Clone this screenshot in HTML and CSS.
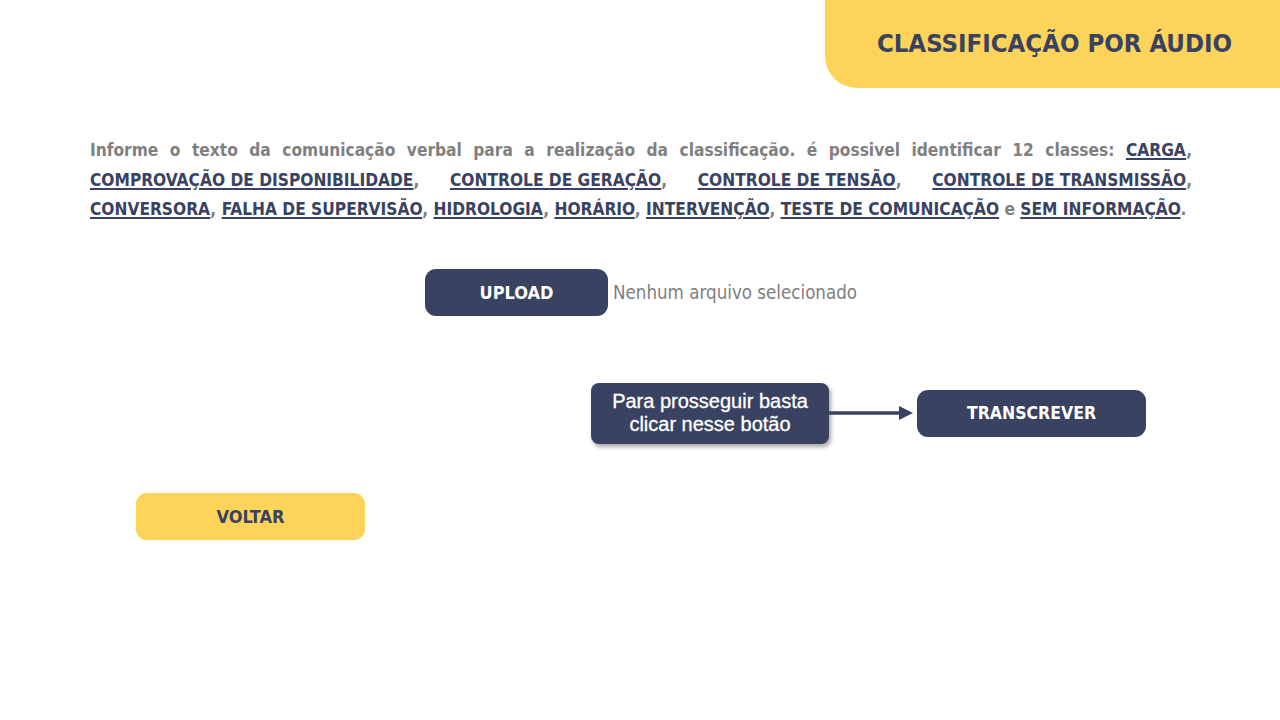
FILE: index.html
```html
<!DOCTYPE html>
<html lang="pt-BR">
<head>
<meta charset="utf-8">
<title>Classificação por Áudio</title>
<link rel="stylesheet" href="styles.css">
</head>
<body>
<div class="page">
  <header class="topbar">
    <div class="title-tab"><h1>CLASSIFICAÇÃO POR ÁUDIO</h1></div>
  </header>

  <section class="intro">
    <span class="line just">Informe o texto da comunicação verbal para a realização da classificação. é possivel identificar 12 classes: <a href="#">CARGA</a>,</span>
    <span class="line just blocks"><a href="#">COMPROVAÇÃO DE DISPONIBILIDADE</a>, <a href="#">CONTROLE DE GERAÇÃO</a>, <a href="#">CONTROLE DE TENSÃO</a>, <a href="#">CONTROLE DE TRANSMISSÃO</a>,</span>
    <span class="line last"><a href="#">CONVERSORA</a>, <a href="#">FALHA DE SUPERVISÃO</a>, <a href="#">HIDROLOGIA</a>, <a href="#">HORÁRIO</a>, <a href="#">INTERVENÇÃO</a>, <a href="#">TESTE DE COMUNICAÇÃO</a> e <a href="#">SEM INFORMAÇÃO</a>.</span>
  </section>

  <div class="upload-row">
    <button class="btn dark upload">UPLOAD</button>
    <span class="file-name">Nenhum arquivo selecionado</span>
  </div>

  <div class="transcribe-row">
    <div class="hint">Para prosseguir basta<br>clicar nesse botão</div>
    <svg class="arrow" width="88" height="20" viewBox="0 0 88 20" aria-hidden="true">
      <line x1="0" y1="10" x2="72" y2="10" stroke="#394261" stroke-width="3.5"/>
      <polygon points="70,3 84,10 70,17" fill="#394261"/>
    </svg>
    <button class="btn dark transcribe">TRANSCREVER</button>
  </div>

  <div class="back-row">
    <button class="btn yellow back">VOLTAR</button>
  </div>
</div>
</body>
</html>
```
FILE: styles.css
```css
* { box-sizing: border-box; }
html, body { margin: 0; padding: 0; background: #fff; }
body { width: 1280px; height: 720px; overflow: hidden; font-family: "DejaVu Sans Condensed", "DejaVu Sans", sans-serif; }
.page { width: 1280px; height: 720px; display: flex; flex-direction: column; }
.topbar { display: flex; justify-content: flex-end; height: 88px; }
.title-tab {
  width: 455px; height: 88px; background: #fed35a;
  border-bottom-left-radius: 32px;
  display: flex; align-items: center; justify-content: center;
  padding-left: 4px; padding-bottom: 2px;
}
.title-tab h1 { margin: 0; font-size: 25.5px; font-weight: 700; color: #394261; }
.intro {
  margin: 48px 0 0 90px; width: 1102px;
  font-size: 17.2px; font-weight: 700; color: #808080; line-height: 29.5px;
}
.line { display: block; }
.line.just { text-align: justify; text-align-last: justify; }
.line.blocks a { display: inline-block; }
.line.last { white-space: nowrap; }
.intro a { color: #394261; text-decoration: underline; text-decoration-thickness: 2px; text-underline-offset: 2px; }
.btn {
  border: none; font-family: inherit; font-weight: 700; font-size: 18px;
  border-radius: 11px; height: 47px; cursor: pointer;
  display: flex; align-items: center; justify-content: center;
}
.btn.dark { background: #394261; color: #fff; }
.btn.yellow { background: #fed35a; color: #394261; }
.upload-row { display: flex; align-items: center; margin: 44px 0 0 425px; gap: 5px; }
.upload { width: 183px; }
.file-name { font-size: 18.6px; color: #808080; }
.transcribe-row { display: flex; align-items: center; margin: 67px 0 0 591px; }
.hint {
  width: 238px; height: 61px; background: #394261; color: #fff;
  border-radius: 8px; box-shadow: 2px 3px 4px rgba(0,0,0,0.35);
  font-family: "Liberation Sans", Arial, sans-serif; font-size: 20px; line-height: 23px;
  display: flex; align-items: center; justify-content: center; text-align: center;
  -webkit-text-stroke: 0.3px #fff;
}
.arrow { display: block; }
.transcribe { width: 229px; font-size: 17.5px; }
.back-row { margin: 49px 0 0 136px; }
.back { width: 229px; }
```
